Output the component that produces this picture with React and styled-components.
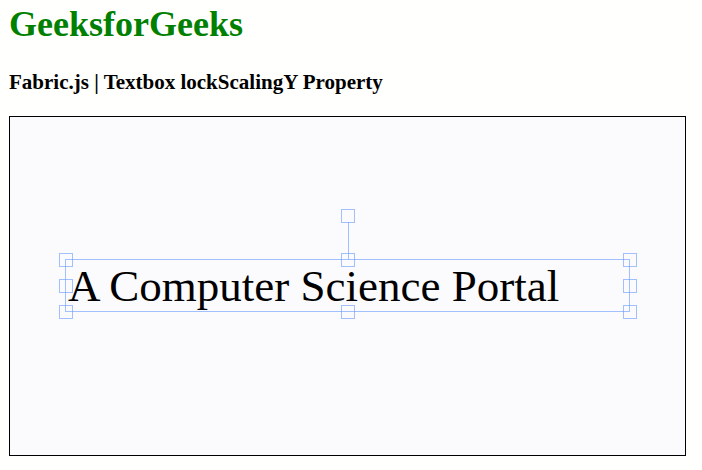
import React from "react";
import styled, { createGlobalStyle } from "styled-components";

const Global = createGlobalStyle`
  html, body { margin: 0; padding: 0; background: #fffffd; }
  body { font-family: "Liberation Serif", "Times New Roman", serif; }
`;

const Page = styled.div`
  padding: 3px 0 0 9px;
`;

const Title = styled.h1`
  margin: 0;
  font-size: 36px;
  line-height: 42px;
  font-weight: bold;
  color: #008000;
`;

const Subtitle = styled.h3`
  margin: 25px 0 0;
  font-size: 21px;
  line-height: 24px;
  font-weight: bold;
  color: #000;
`;

const Canvas = styled.div`
  position: relative;
  margin-top: 22px;
  width: 675px;
  height: 338px;
  border: 1px solid #000;
  background: #fbfbfe;
  overflow: hidden;
`;

const TextObject = styled.div`
  position: absolute;
  left: ${(p) => p.$x}px;
  top: ${(p) => p.$y}px;
  width: ${(p) => p.$w}px;
  font-family: "Liberation Serif", "Times New Roman", serif;
  font-size: ${(p) => p.$size}px;
  line-height: ${(p) => p.$lh}px;
  color: #000;
  white-space: nowrap;
  padding-left: 3px;
  box-sizing: border-box;
`;

const Overlay = styled.svg`
  position: absolute;
  left: 0;
  top: 0;
  pointer-events: none;
`;

const BORDER = "rgba(102,153,255,0.6)";

function Selection({ x, y, w, h }) {
  const cs = 13;
  const cx = x + w / 2;
  const cy = y + h / 2;
  const handles = [
    [x, y], [cx, y], [x + w, y],
    [x, cy], [x + w, cy],
    [x, y + h], [cx, y + h], [x + w, y + h],
    [cx, y - 44],
  ];
  const snap = (v) => Math.round(v - cs / 2) + 0.5;
  return (
    <Overlay width="675" height="338" viewBox="0 0 675 338">
      <rect x={x} y={y} width={w} height={h} fill="none" stroke={BORDER} strokeWidth="1" />
      <line x1={Math.round(cx) + 0.5} y1={y} x2={Math.round(cx) + 0.5} y2={y - 44 + cs / 2} stroke={BORDER} strokeWidth="1" />
      {handles.map(([hx, hy], i) => (
        <rect
          key={i}
          x={snap(hx)}
          y={snap(hy)}
          width={cs}
          height={cs}
          fill="none"
          stroke={BORDER}
          strokeWidth="1"
        />
      ))}
    </Overlay>
  );
}

export default function App() {
  return (
    <>
      <Global />
      <Page>
        <Title>GeeksforGeeks</Title>
        <Subtitle>Fabric.js | Textbox lockScalingY Property</Subtitle>
        <Canvas>
          <TextObject $x={55} $y={142.5} $w={564} $size={45} $lh={52}>
            A Computer Science Portal
          </TextObject>
          <Selection x={55.5} y={142.5} w={564} h={52} />
        </Canvas>
      </Page>
    </>
  );
}
